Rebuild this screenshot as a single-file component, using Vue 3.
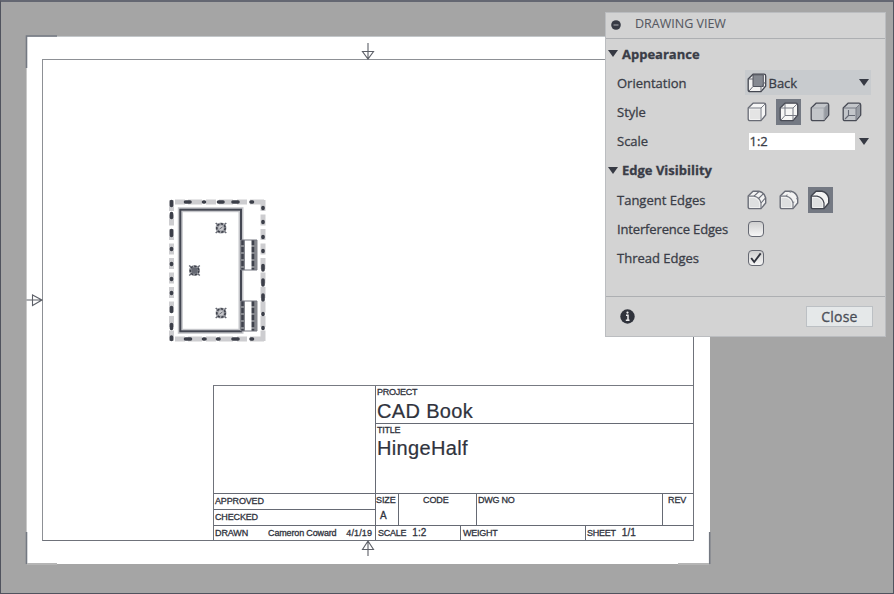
<script setup>
import { ref } from 'vue'

const style = ref(1)
const tangent = ref(2)
const interference = ref(false)
const thread = ref(true)
const styles = ['Visible', 'Hidden', 'Shaded', 'ShadedHidden']
const tangents = ['Full', 'Shortened', 'Off']
const outline = 'M1.2 6 L6 1.2 H17 Q18.7 1.2 18.7 3 V13 L14 18.6 H3 Q1.2 18.6 1.2 17 Z'
</script>

<template>
  <main class="window">
    <section class="sheet">
      <div class="frame">
        <div class="title-block">
          <div class="left-col">
            <div class="logo-cell"></div>
            <div class="row"><span>APPROVED</span></div>
            <div class="row"><span>CHECKED</span></div>
            <div class="row drawn"><span class="dr">DRAWN</span><span class="name">Cameron Coward</span><span class="date">4/1/19</span></div>
          </div>
          <div class="right-col">
            <div class="project"><span class="cap">PROJECT</span><span class="big">CAD Book</span></div>
            <div class="title"><span class="cap">TITLE</span><span class="big hinge">HingeHalf</span></div>
            <div class="codes">
              <div class="size"><span>SIZE</span><span class="a">A</span></div>
              <div class="code">CODE</div>
              <div class="dwg">DWG NO</div>
              <div class="rev">REV</div>
            </div>
            <div class="last">
              <div class="scale">SCALE<b>1:2</b></div>
              <div class="weight">WEIGHT</div>
              <div class="sheetno">SHEET<b>1/1</b></div>
            </div>
          </div>
        </div>
      </div>
    </section>

    <svg class="overlay" width="894" height="594" viewBox="0 0 894 594" fill="none">
      <g stroke="#747982" stroke-width="1.6">
        <path d="M57 36H26.5V68" />
        <path d="M26.5 532V564" />
        <path d="M709.7 532V564" />
      </g>
      <path d="M27 564H57M678 564H709" stroke="#b5b5b5" stroke-width="2" />
      <g stroke="#5d6068" stroke-width="1.1">
        <path d="M368 43V59M362.5 51.5H373.5L368 59Z" />
        <path d="M26.5 300H42M32.5 295V305.5L42 300Z" />
        <path d="M368 556V541M362.5 549.5H373.5L368 541Z" />
      </g>
      <g stroke="#cdcdd0" stroke-width="5">
        <path d="M171.5 200V341M263 200V341" stroke-dasharray="11 3.5" />
        <path d="M175 202H266M175 339H266" stroke-dasharray="10 3 14 4" />
      </g>
      <g stroke="#3c3f49" stroke-width="3.6" stroke-linecap="round">
        <path d="M171.5 201.5V205.5M171.5 213.5V217.5M171.5 230.5V235.5M171.5 248.5V249.5M171.5 263.5V264.5M171.5 278.5V279.5M171.5 292.5V293.5M171.5 307.5V311.5M171.5 324.5V328.5M171.5 337V339.5" />
        <path d="M263 207.5V208.5M263 221.5V222.5M263 236.5V237.5M263 250.5V251.5M263 265.5V270M263 280V285M263 295V300M263 313.5V314.5M263 327.5V328.5" />
        <path d="M185.5 202H190M203.5 202H204.5M218.5 202H223M233 202H238M251 202H252.5M185.5 339H190.5M203.5 339H205M217.5 339H219M233 339H238M251 339H252.5" />
      </g>
      <rect x="180.3" y="209.7" width="60.7" height="121.6" stroke="#c5c6ca" stroke-width="5" />
      <rect x="180.3" y="209.7" width="60.7" height="121.6" stroke="#444752" stroke-width="2" />
      <g v-for="y in [240, 301]" :key="y">
        <rect x="240" :y="y" width="5" height="30" fill="#85878d" />
        <rect x="251.5" :y="y" width="6" height="30" fill="#85878d" />
        <path :d="`M242.5 ${y}V${y + 30}M253 ${y}V${y + 30}`" stroke="#3f424c" stroke-width="2.5" stroke-dasharray="5 2" />
        <path :d="`M241 ${y}H257M257 ${y + 30}H241`" stroke="#747780" />
      </g>
      <g v-for="p in [[221, 228], [194.5, 270.5], [221, 313]]" :key="p.join()" :transform="`translate(${p[0]} ${p[1]})`">
        <circle r="4" fill="#c9c9cd" stroke="#a0a2a8" stroke-width="3" />
        <circle r="4.2" stroke="#3c3f49" stroke-width="1.6" stroke-dasharray="2.4 1.4" />
        <path d="M-5.3 -5L-3.5 -3.5M5.3 -5L3.5 -3.5M-5.3 5L-3.5 3.5M5.3 5L3.5 3.5" stroke="#666973" stroke-width="1.6" />
        <circle v-if="p[0] < 200" r="3.2" fill="#666973" />
        <path v-else d="M-1.5 1L1.5 -1" stroke="#666973" />
      </g>
    </svg>

    <aside class="panel">
      <header>
        <svg width="10" height="10" viewBox="0 0 10 10"><circle cx="5" cy="5" r="4.8" fill="#373a44" /><path d="M2.5 5H7.5" stroke="#999ba0" stroke-width="1.2" /></svg>
        <h1>DRAWING VIEW</h1>
      </header>
      <div class="body">
        <h2><i class="tri"></i><span>Appearance</span></h2>
        <div class="field">
          <label>Orientation</label>
          <div class="select">
            <svg width="20" height="20" viewBox="0 0 20 20" stroke-linejoin="round">
              <path :d="outline" fill="#f2f2f2" stroke="#444751" stroke-width="1.3" />
              <path d="M6 1.8H16.3V13.5H6Z" fill="#858991" stroke="#50535d" stroke-width="1" />
              <path d="M1.5 6H6M2 18L6 13.5M14 18V14L18.3 9" fill="none" stroke="#646771" />
            </svg>
            <span>Back</span><i class="tri"></i>
          </div>
        </div>
        <div class="field">
          <label class="st">Style</label>
          <div class="choices">
            <button v-for="(s, i) in styles" :key="s" :class="{ on: style === i }" @click="style = i">
              <svg width="20" height="20" viewBox="0 0 20 20" stroke-linejoin="round">
                <path :d="outline" :fill="i < 2 ? '#f6f6f6' : '#c3c6ca'" :stroke="i === 0 ? '#686b75' : '#484b55'" stroke-width="1.3" />
                <path v-if="i >= 2" d="M14 6L18 2V13L14 17.8Z" fill="#989ca3" />
                <path v-if="i === 0" d="M3 7.5H13V17.2H3Z" fill="#e4e4e4" />
                <path d="M2 6H14V18M14 6L18.3 1.8" fill="none" :stroke="i === 2 ? '#a5a9af' : '#777a84'" stroke-width="1" />
                <path v-if="i === 1" d="M6 2V13.5H18M6 13.5L2 18" fill="none" stroke="#777a84" stroke-width="1" />
                <path v-if="i === 3" d="M6.5 8V13.5H13M6.5 13.5L3 17" fill="none" stroke="#656974" stroke-width="1.1" />
              </svg>
            </button>
          </div>
        </div>
        <div class="field">
          <label class="sc">Scale</label>
          <div class="combo"><span class="input">1:2</span><i class="tri"></i></div>
        </div>
        <h2><i class="tri"></i><span class="ev">Edge Visibility</span></h2>
        <div class="field">
          <label class="te">Tangent Edges</label>
          <div class="choices">
            <button v-for="(t, i) in tangents" :key="t" :class="{ on: tangent === i }" @click="tangent = i">
              <svg width="20" height="20" viewBox="0 0 20 20" stroke-linejoin="round">
                <path d="M1.2 6L6 1.2H12Q17.5 2.5 18.7 8V13L14 18.6H3Q1.2 18.6 1.2 17Z" fill="#f3f3f3" :stroke="i === 2 ? '#41444e' : '#6b6e78'" stroke-width="1.4" />
                <path d="M2.5 8H7Q11 9 12.3 13V17.2H2.5Z" fill="#dedfe0" />
                <path d="M1.5 6.2H7Q12.8 7.5 14 13V18" fill="none" :stroke="i === 2 ? '#41444e' : '#777a83'" stroke-width="1.2" />
                <path v-if="i === 0" d="M7 6.2L12 1.5M11.5 8.5L16.5 3.7M14 13L18.4 8" fill="none" stroke="#6b6e78" stroke-width="1.1" />
                <path v-if="i === 1" d="M7 6L8.5 4.6M10.8 2.6L12 1.5M14 13L15.2 11.6M17.3 9.2L18.3 8" fill="none" stroke="#888b93" stroke-width="1.1" />
              </svg>
            </button>
          </div>
        </div>
        <div class="field">
          <label class="ie">Interference Edges</label>
          <div class="check" @click="interference = !interference"><svg width="16" height="16" viewBox="0 0 16 16"><path v-if="interference" d="M4 8.5L6.7 11.5L12 4" fill="none" stroke="#30333d" stroke-width="2" /></svg></div>
        </div>
        <div class="field">
          <label class="th">Thread Edges</label>
          <div class="check" @click="thread = !thread"><svg width="16" height="16" viewBox="0 0 16 16"><path v-if="thread" d="M3.2 8L6.2 12L12.7 3.4" fill="none" stroke="#30333d" stroke-width="1.9" /></svg></div>
        </div>
      </div>
      <footer>
        <svg width="15" height="15" viewBox="0 0 15 15"><circle cx="7.5" cy="7.5" r="7.2" fill="#30333c" /><path d="M6 6.2H8V11M5.8 11.2H9.5" fill="none" stroke="#ededed" stroke-width="1.5" /><circle cx="7.5" cy="3.6" r="1.1" fill="#ededed" /></svg>
        <button class="close">Close</button>
      </footer>
    </aside>
  </main>
</template>

<style>
body { margin: 0; overflow: hidden; }
</style>

<style scoped>
* { box-sizing: border-box; }
.window { position: relative; width: 894px; height: 594px; padding: 34px 0 0 25px; background: #a5a5a5; border: 1px solid #50535e; border-top: 2px solid #646772; }
.sheet { width: 684px; height: 528px; padding: 22px 16px 23px 15px; background: #fff; border-top: 1px solid #c3c7ca; border-left: 1px solid #c9c9c9; }
.frame { display: flex; justify-content: flex-end; align-items: flex-end; height: 100%; border: 1px solid #6f727a; border-top-color: #8d9095; border-left-color: #8d9095; }
.overlay { position: absolute; left: -1px; top: -2px; }
.title-block { display: grid; grid-template-columns: 161px 1fr; width: 480px; height: 155px; border-top: 1px solid #777a82; border-left: 1px solid #6f727a; font: 9px/10px "Liberation Sans", sans-serif; color: #30333d; -webkit-text-stroke: 0.3px #30333d; white-space: nowrap; }
.left-col { display: grid; grid-template-rows: 107px 16px 16px 1fr; }
.row { display: flex; padding: 2px 0 0 1px; border-top: 1px solid #666a74; letter-spacing: -.15px; }
.drawn { justify-content: space-between; padding-right: 3px; letter-spacing: -.1px; }
.name { margin-left: 10px; letter-spacing: -.15px; }
.date { letter-spacing: .1px; }
.right-col { display: grid; grid-template-rows: 37px 70px 32px 1fr; border-left: 1px solid #666a74; min-width: 0; }
.project, .title { display: flex; flex-direction: column; padding: 1px 0 0 1px; }
.title { border-top: 1px solid #666a74; }
.cap { letter-spacing: -.25px; }
.big { font-size: 20px; line-height: 22px; letter-spacing: .35px; margin-top: 3px; -webkit-text-stroke: .2px; }
.hinge { margin-top: 2px; letter-spacing: .35px; }
.codes { display: grid; grid-template-columns: 22px 78px 186px 1fr; border-top: 1px solid #666a74; letter-spacing: -.1px; }
.codes > div { padding-top: 1px; }
.codes > div + div, .last > div + div { border-left: 1px solid #666a74; }
.size { display: flex; flex-direction: column; gap: 6px; }
.a { padding-left: 4px; font-size: 10px; }
.codes .code { padding-left: 24px; }
.codes .dwg { padding-left: 1px; letter-spacing: -.25px; }
.codes .rev { padding-left: 5px; }
.last { display: grid; grid-template-columns: 84px 125px 1fr; border-top: 1px solid #666a74; letter-spacing: -.25px; }
.last > div { padding: 2px 0 0 2px; }
.last > .sheetno { padding-left: 1px; }
.last b { font-weight: 400; font-size: 10px; margin-left: 6px; letter-spacing: .1px; }

.panel { position: absolute; left: 604px; top: 10px; width: 281px; height: 325px; display: flex; flex-direction: column; background: #d3d3d3; border: 1px solid #bbbdc0; color: #3a3d47; font: 13px/20px "Open Sans", "Noto Sans", sans-serif; -webkit-text-stroke: .3px #3a3d47; }
.panel header { display: flex; align-items: center; gap: 14px; height: 26px; padding: 0 0 1px 5px; border-bottom: 1px solid #adafb2; }
h1, h2 { margin: 0; font-size: 13px; line-height: 20px; }
h1 { font-weight: 400; font-size: 12.5px; line-height: 18px; padding-bottom: 2px; color: #565962; -webkit-text-stroke: .1px; }
.body { flex: 1; display: flex; flex-direction: column; }
h2 { display: flex; align-items: center; gap: 4px; height: 29.2px; padding-left: 2px; }
.tri { width: 0; height: 0; border: 5px solid transparent; border-top: 7px solid #363943; border-bottom: 0; }
.field { display: grid; grid-template-columns: 127.5px 1fr; align-items: center; height: 29.2px; padding-left: 11px; white-space: nowrap; }
.ie { letter-spacing: -.15px; }
.select { display: flex; align-items: center; width: 126px; height: 25px; padding: 0 2px; background: #c8cbce; }
.select span { margin-left: 2px; flex: 1; }
.choices { display: flex; gap: 6.5px; }
.choices button { display: flex; align-items: center; justify-content: center; width: 25px; height: 26px; padding: 0; border: 0; background: none; }
.choices button.on { background: #747983; }
.combo { display: flex; align-items: center; gap: 4px; padding-left: 4px; }
.input { width: 106px; height: 17px; padding-left: 1px; background: #fff; line-height: 16px; font-size: 13px; }
.check { width: 16px; height: 16px; margin-left: 3px; border: 1.5px solid #656872; border-radius: 4px; background: linear-gradient(#cfcfcf, #f6f6f6); }
.check svg { display: block; margin: -1px; }
.panel footer { display: flex; align-items: center; justify-content: space-between; height: 40px; padding: 0 12px 0 14px; border-top: 1px solid #adafb2; }
.close { width: 67px; height: 21px; padding: 0; border: 1px solid #bcc0c4; background: #e5e8e9; color: #555963; font: 14px/18px "Open Sans", sans-serif; letter-spacing: .2px; }
</style>
